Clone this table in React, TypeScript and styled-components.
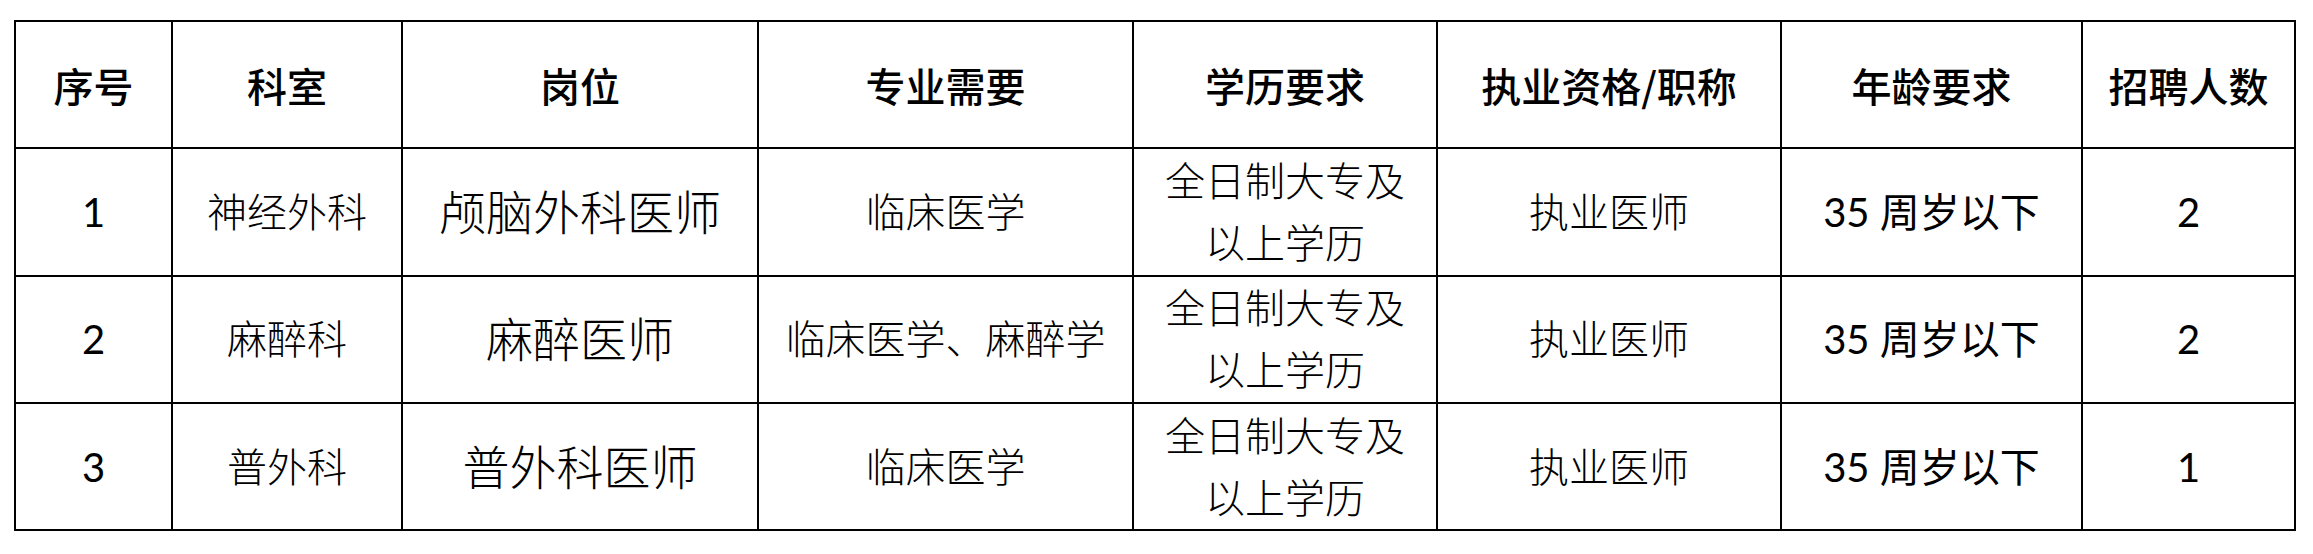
import React from "react";
import styled, { createGlobalStyle } from "styled-components";

const GlobalStyle = createGlobalStyle`
  html, body {
    margin: 0;
    padding: 0;
    background: #ffffff;
  }
  body {
    font-family: "Noto Sans CJK SC", "Noto Sans", sans-serif;
    color: #000;
  }
`;

const Page = styled.div`
  padding: 20px 0 0 14px;
  width: 2313px;
  height: 554px;
  box-sizing: border-box;
  background: #fff;
`;

const Table = styled.table`
  border-collapse: collapse;
  table-layout: fixed;
  width: 2282px;
`;

const HeadCell = styled.th`
  border: 2px solid #000;
  height: 125.3px;
  padding: 0;
  text-align: center;
  vertical-align: middle;
  font-family: "Noto Sans CJK SC", sans-serif;
  font-weight: 500;
  font-size: 40px;
  line-height: 1.2;
  white-space: nowrap;
`;

const Cell = styled.td<{ $large?: boolean; $num?: boolean }>`
  border: 2px solid #000;
  height: 125.3px;
  padding: 0;
  text-align: center;
  vertical-align: middle;
  font-family: Lato, "Noto Sans CJK SC", sans-serif;
  font-weight: ${(p) => (p.$num ? 400 : 300)};
  font-size: ${(p) => (p.$large ? "47px" : "40px")};
  line-height: 62px;
  white-space: nowrap;
`;

const Line = styled.span`
  display: block;
`;

const widths = [157, 230, 356, 375, 304, 344, 301, 213];

const headers = ["序号", "科室", "岗位", "专业需要", "学历要求", "执业资格/职称", "年龄要求", "招聘人数"];

type Row = {
  no: string;
  dept: string;
  post: string;
  major: string;
  edu: string[];
  qual: string;
  age: string;
  count: string;
};

const rows: Row[] = [
  {
    no: "1",
    dept: "神经外科",
    post: "颅脑外科医师",
    major: "临床医学",
    edu: ["全日制大专及", "以上学历"],
    qual: "执业医师",
    age: "35 周岁以下",
    count: "2",
  },
  {
    no: "2",
    dept: "麻醉科",
    post: "麻醉医师",
    major: "临床医学、麻醉学",
    edu: ["全日制大专及", "以上学历"],
    qual: "执业医师",
    age: "35 周岁以下",
    count: "2",
  },
  {
    no: "3",
    dept: "普外科",
    post: "普外科医师",
    major: "临床医学",
    edu: ["全日制大专及", "以上学历"],
    qual: "执业医师",
    age: "35 周岁以下",
    count: "1",
  },
];

export default function App() {
  return (
    <>
      <GlobalStyle />
      <Page>
        <Table>
          <colgroup>
            {widths.map((w, i) => (
              <col key={i} style={{ width: w }} />
            ))}
          </colgroup>
          <thead>
            <tr>
              {headers.map((h) => (
                <HeadCell key={h}>{h}</HeadCell>
              ))}
            </tr>
          </thead>
          <tbody>
            {rows.map((r) => (
              <tr key={r.no}>
                <Cell $num>{r.no}</Cell>
                <Cell>{r.dept}</Cell>
                <Cell $large>{r.post}</Cell>
                <Cell>{r.major}</Cell>
                <Cell>
                  {r.edu.map((l) => (
                    <Line key={l}>{l}</Line>
                  ))}
                </Cell>
                <Cell>{r.qual}</Cell>
                <Cell $num>{r.age}</Cell>
                <Cell $num>{r.count}</Cell>
              </tr>
            ))}
          </tbody>
        </Table>
      </Page>
    </>
  );
}
